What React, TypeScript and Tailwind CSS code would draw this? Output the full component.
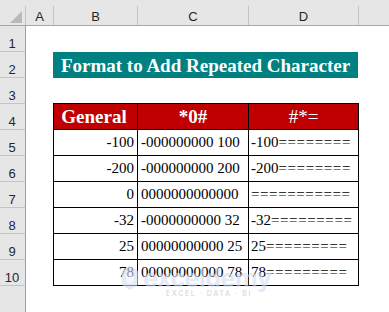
import React from "react";

const serif = "font-['Liberation_Serif','Times_New_Roman',serif]";
const sans = "font-['Liberation_Sans',Arial,sans-serif]";

const data: [string, string, string, string][] = [
  ["-100", "-000000000 100", "-100", "========"],
  ["-200", "-000000000 200", "-200", "========"],
  ["0", "0000000000000", "", "==========="],
  ["-32", "-0000000000 32", "-32", "========="],
  ["25", "00000000000 25", "25", "========="],
  ["78", "00000000000 78", "78", "========="],
];

function RowHeader({ n }: { n: number }) {
  return (
    <div
      className={`w-[26px] h-[26px] shrink-0 bg-[#e6e6e6] border-r border-r-[#9e9e9e] border-b border-b-[#c4c4c4] flex items-end justify-center text-[13px] leading-[15px] text-[#262626] ${sans}`}
    >
      <span className="pr-[1px]">{n}</span>
    </div>
  );
}

function ColHead({ w, label }: { w: string; label: string }) {
  return (
    <div className={`${w} h-full shrink-0 flex items-end`}>
      <div
        className={`w-full h-[19px] border-r border-r-[#c4c4c4] flex items-center justify-center pt-[2px] text-[13px] leading-[15px] text-[#262626] ${sans}`}
      >
        {label}
      </div>
    </div>
  );
}

export default function App() {
  return (
    <div className="relative w-[389px] h-[312px] overflow-hidden bg-white">
      {/* column header */}
      <div className="flex h-[26px] bg-[#e6e6e6] border-b border-b-[#a6a6a6]">
        <div className="w-[26px] h-full shrink-0 flex items-end">
          <div className="w-full h-[19px] border-r border-r-[#c4c4c4] flex items-end justify-end pr-[3px] pb-[2px]">
            <svg width="12" height="12" viewBox="0 0 12 12">
              <polygon points="12,0 12,12 0,12" fill="#b9b9b9" />
            </svg>
          </div>
        </div>
        <ColHead w="w-[28px]" label="A" />
        <ColHead w="w-[84px]" label="B" />
        <ColHead w="w-[111px]" label="C" />
        <ColHead w="w-[110px]" label="D" />
        <div className="flex-1" />
      </div>

      {/* row 1 */}
      <div className="flex">
        <RowHeader n={1} />
        <div className="flex-1 h-[26px]" />
      </div>

      {/* row 2 - title */}
      <div className="flex">
        <RowHeader n={2} />
        <div className="w-[27px] shrink-0" />
        <div
          className={`w-[305px] h-[26px] shrink-0 bg-[#008080] flex items-center justify-center text-white font-bold text-[19px] leading-[21px] ${serif}`}
        >
          Format to Add Repeated Character
        </div>
        <div className="flex-1" />
      </div>

      {/* row 3 */}
      <div className="flex">
        <RowHeader n={3} />
        <div className="w-[27px] shrink-0" />
        <div className="w-[306px] h-[26px] shrink-0 border-b border-b-black" />
        <div className="flex-1" />
      </div>

      {/* row 4 - table header */}
      <div className="flex">
        <RowHeader n={4} />
        <div className="w-[27px] shrink-0" />
        <div
          className={`w-[85px] h-[26px] shrink-0 bg-[#c00000] border-l border-r border-b border-black flex items-center justify-center text-white font-bold text-[19px] leading-[21px] ${serif}`}
        >
          <span className="pr-[3px]">General</span>
        </div>
        <div
          className={`w-[111px] h-[26px] shrink-0 bg-[#c00000] border-r border-b border-black flex items-center justify-center text-white font-bold text-[19px] leading-[21px] ${serif}`}
        >
          *0#
        </div>
        <div
          className={`w-[110px] h-[26px] shrink-0 bg-[#c00000] border-r border-b border-black flex items-center justify-center text-white text-[19px] leading-[21px] ${serif}`}
        >
          #*=
        </div>
        <div className="flex-1" />
      </div>

      {data.map((r, i) => (
        <div className="flex" key={i}>
          <RowHeader n={i + 5} />
          <div className="w-[27px] shrink-0" />
          <div
            className={`w-[85px] h-[26px] shrink-0 border-l border-r border-b border-black flex items-center justify-end pr-[3px] text-black text-[15px] leading-[17px] whitespace-nowrap ${serif}`}
          >
            {r[0]}
          </div>
          <div
            className={`w-[111px] h-[26px] shrink-0 border-r border-b border-black flex items-center pl-[3px] text-black text-[15px] leading-[17px] whitespace-nowrap overflow-hidden ${serif}`}
          >
            {r[1]}
          </div>
          <div
            className={`w-[110px] h-[26px] shrink-0 border-r border-b border-black flex items-center pl-[2px] text-black text-[15px] leading-[17px] whitespace-nowrap overflow-hidden ${serif}`}
          >
            <span>{r[2]}</span>
            <span className="tracking-[0.6px]">{r[3]}</span>
          </div>
          <div className="flex-1" />
        </div>
      ))}

      {/* row 11 (cut) */}
      <div className="flex">
        <div className="w-[26px] h-[30px] shrink-0 bg-[#e6e6e6] border-r border-r-[#9e9e9e]" />
        <div className="flex-1" />
      </div>

      {/* watermark */}
      <div className="absolute left-[122px] top-[266px] pointer-events-none opacity-60">
        <div className="flex items-center gap-[5px]">
          <svg width="16" height="24" viewBox="0 0 16 24">
            <polygon points="8,0 16,5 16,19 8,24 0,19 0,5" fill="#d5def3" />
            <polygon points="8,6 12,9 12,15 8,18 4,15 4,9" fill="#eef2fb" />
          </svg>
          <span className="font-['Inter',sans-serif] font-bold text-[25px] leading-[24px] text-[#d3ddf3] tracking-[-0.5px]">
            exceldemy
          </span>
        </div>
        <div className="pl-[44px] mt-[0px] font-['Inter',sans-serif] font-semibold text-[7px] leading-[8px] tracking-[1.6px] text-[#c9c9c9]">
          EXCEL · DATA · BI
        </div>
      </div>
    </div>
  );
}
